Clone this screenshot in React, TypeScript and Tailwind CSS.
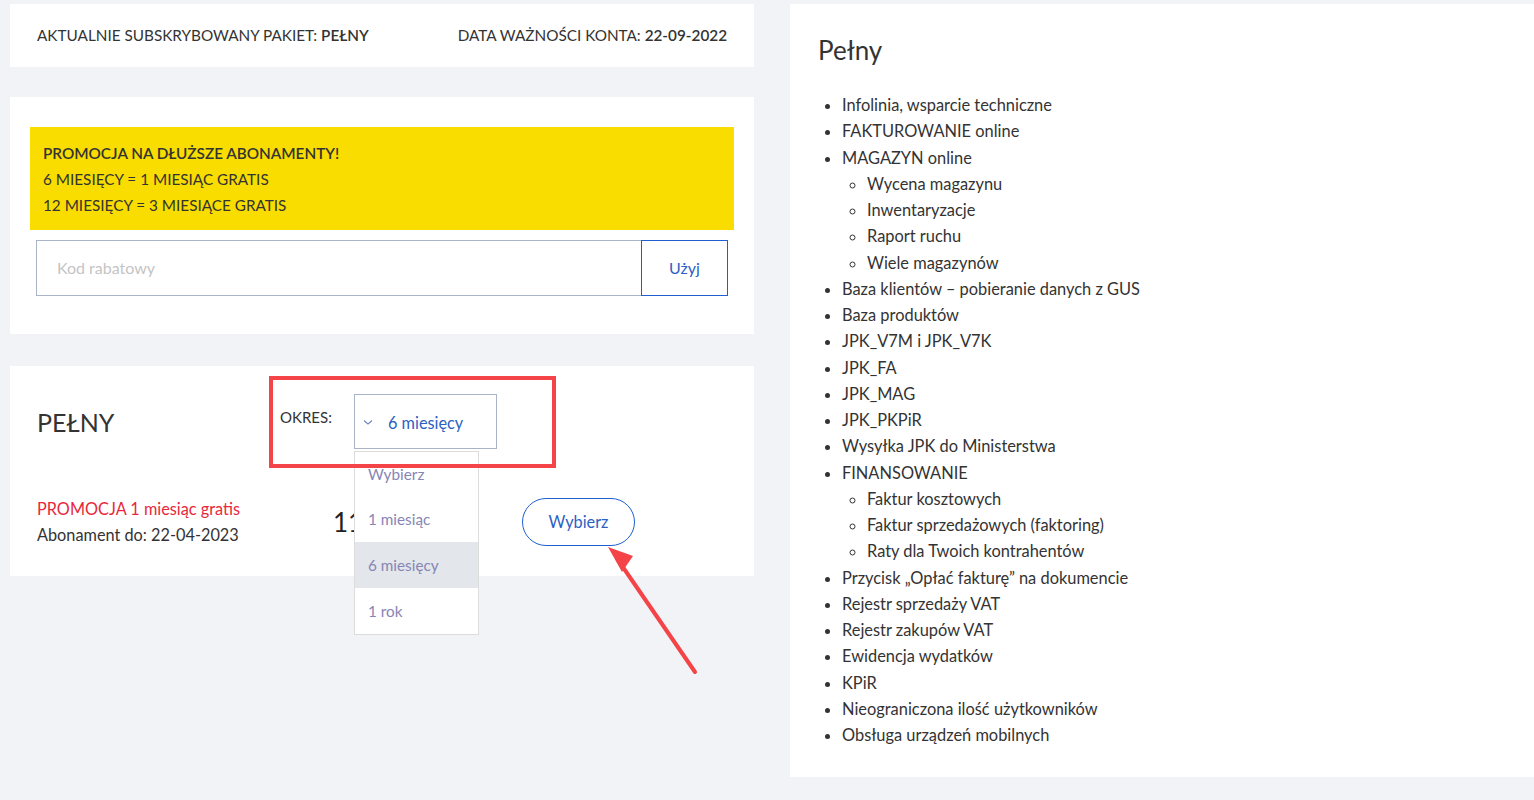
import React from "react";

const font = { fontFamily: '"Source Sans Pro", Lato, "Noto Sans", sans-serif' };

const features: { t: string; sub?: string[] }[] = [
  { t: "Infolinia, wsparcie techniczne" },
  { t: "FAKTUROWANIE online" },
  { t: "MAGAZYN online", sub: ["Wycena magazynu", "Inwentaryzacje", "Raport ruchu", "Wiele magazynów"] },
  { t: "Baza klientów – pobieranie danych z GUS" },
  { t: "Baza produktów" },
  { t: "JPK_V7M i JPK_V7K" },
  { t: "JPK_FA" },
  { t: "JPK_MAG" },
  { t: "JPK_PKPiR" },
  { t: "Wysyłka JPK do Ministerstwa" },
  { t: "FINANSOWANIE", sub: ["Faktur kosztowych", "Faktur sprzedażowych (faktoring)", "Raty dla Twoich kontrahentów"] },
  { t: "Przycisk „Opłać fakturę” na dokumencie" },
  { t: "Rejestr sprzedaży VAT" },
  { t: "Rejestr zakupów VAT" },
  { t: "Ewidencja wydatków" },
  { t: "KPiR" },
  { t: "Nieograniczona ilość użytkowników" },
  { t: "Obsługa urządzeń mobilnych" },
];

export default function App() {
  return (
    <div className="min-h-[800px] w-full bg-[#f2f3f7] text-[#333333] relative" style={font}>
      <div className="flex pt-[4px] pl-[10px]">
        {/* Left column */}
        <div className="w-[744px] flex flex-col">
          <div className="bg-white h-[63px] px-[27px] flex items-center justify-between text-[15.3px] uppercase">
            <span>
              Aktualnie subskrybowany pakiet: <b className="font-semibold">Pełny</b>
            </span>
            <span>
              Data ważności konta: <b className="font-semibold">22-09-2022</b>
            </span>
          </div>

          <div className="bg-white mt-[30px] pt-[30px] pb-[38px] px-[20px]">
            <div className="bg-[#f9dd00] pt-[13px] pb-[12px] px-[13px] text-[15.3px] leading-[26px] uppercase text-[#333]">
              <div className="font-semibold">Promocja na dłuższe abonamenty!</div>
              <div>6 miesięcy = 1 miesiąc gratis</div>
              <div>12 miesięcy = 3 miesiące gratis</div>
            </div>
            <div className="mt-[10px] mx-[6px] flex h-[56px]">
              <div className="flex-1 border border-[#a9b4c8] border-r-0 flex items-center pl-[20px] text-[16px] text-[#c4c4c4]">
                Kod rabatowy
              </div>
              <div className="w-[87px] border border-[#1f5fd0] flex items-center justify-center text-[16px] text-[#2c5fc4]">
                Użyj
              </div>
            </div>
          </div>

          <div className="bg-white mt-[32px] h-[210px] pt-[28px] px-[27px] relative">
            <div className="flex items-start">
              <div className="w-[243px] h-[55px] flex items-center text-[25px] pt-[2px]">PEŁNY</div>
              <div className="text-[15px] w-[74px] pt-[12px]">OKRES:</div>
              <div className="relative">
                <div className="w-[143px] h-[55px] border border-[#a9b4c8] flex items-center pl-[7px] text-[16.3px] text-[#2c5fc4]">
                  <svg width="12" height="12" viewBox="0 0 12 12" className="mr-[14px]">
                    <path d="M2 4.5 L6 8 L10 4.5" fill="none" stroke="#6f86c6" strokeWidth="1.1" />
                  </svg>
                  <span className="pt-[3px]">6 miesięcy</span>
                </div>
              </div>
            </div>
            <div className="flex items-center mt-[47px]">
              <div className="w-[296px] text-[16.3px] leading-[26px]">
                <div className="text-[#e8283c]">PROMOCJA 1 miesiąc gratis</div>
                <div>Abonament do: 22-04-2023</div>
              </div>
              <div className="w-[189px]">
                <div className="w-[21px] overflow-hidden whitespace-nowrap text-[26px] leading-[30px] text-[#222]">11</div>
              </div>
              <div className="w-[113px] h-[48px] rounded-full border border-[#1f5fd0] flex items-center justify-center text-[16.3px] text-[#2c5fc4]">
                Wybierz
              </div>
            </div>
          </div>
        </div>

        {/* Right column */}
        <div className="ml-[36px] flex-1 bg-white h-[773px] pt-[30px] pl-[28px]">
          <h2 className="text-[26px] leading-[32px] font-normal">Pełny</h2>
          <ul className="mt-[26px] list-disc pl-[24px] text-[16.4px] leading-[26.25px]">
            {features.map((f) => (
              <li key={f.t}>
                {f.t}
                {f.sub && (
                  <ul className="list-[circle] pl-[25px]">
                    {f.sub.map((s) => (
                      <li key={s}>{s}</li>
                    ))}
                  </ul>
                )}
              </li>
            ))}
          </ul>
        </div>
      </div>

      {/* Dropdown overlay */}
      <div className="absolute left-[354px] top-[451px] w-[125px] bg-white border border-[#dcdcdc] text-[15.3px] text-[#8785b5]">
        <div className="h-[45px] flex items-center pl-[13px]">Wybierz</div>
        <div className="h-[45px] flex items-center pl-[13px]">1 miesiąc</div>
        <div className="h-[46px] flex items-center pl-[13px] bg-[#e3e6ea]">6 miesięcy</div>
        <div className="h-[46px] flex items-center pl-[13px]">1 rok</div>
      </div>

      {/* Red annotation rectangle */}
      <div className="absolute left-[269px] top-[376px] w-[287px] h-[92px] border-4 border-[#f44447] pointer-events-none" />

      {/* Red arrow */}
      <svg className="absolute left-0 top-0 pointer-events-none" width="1534" height="800">
        <line x1="695" y1="672" x2="618" y2="560" stroke="#f44447" strokeWidth="4" strokeLinecap="round" />
        <polygon points="608,547 622,572 633,556" fill="#f44447" />
      </svg>
    </div>
  );
}
